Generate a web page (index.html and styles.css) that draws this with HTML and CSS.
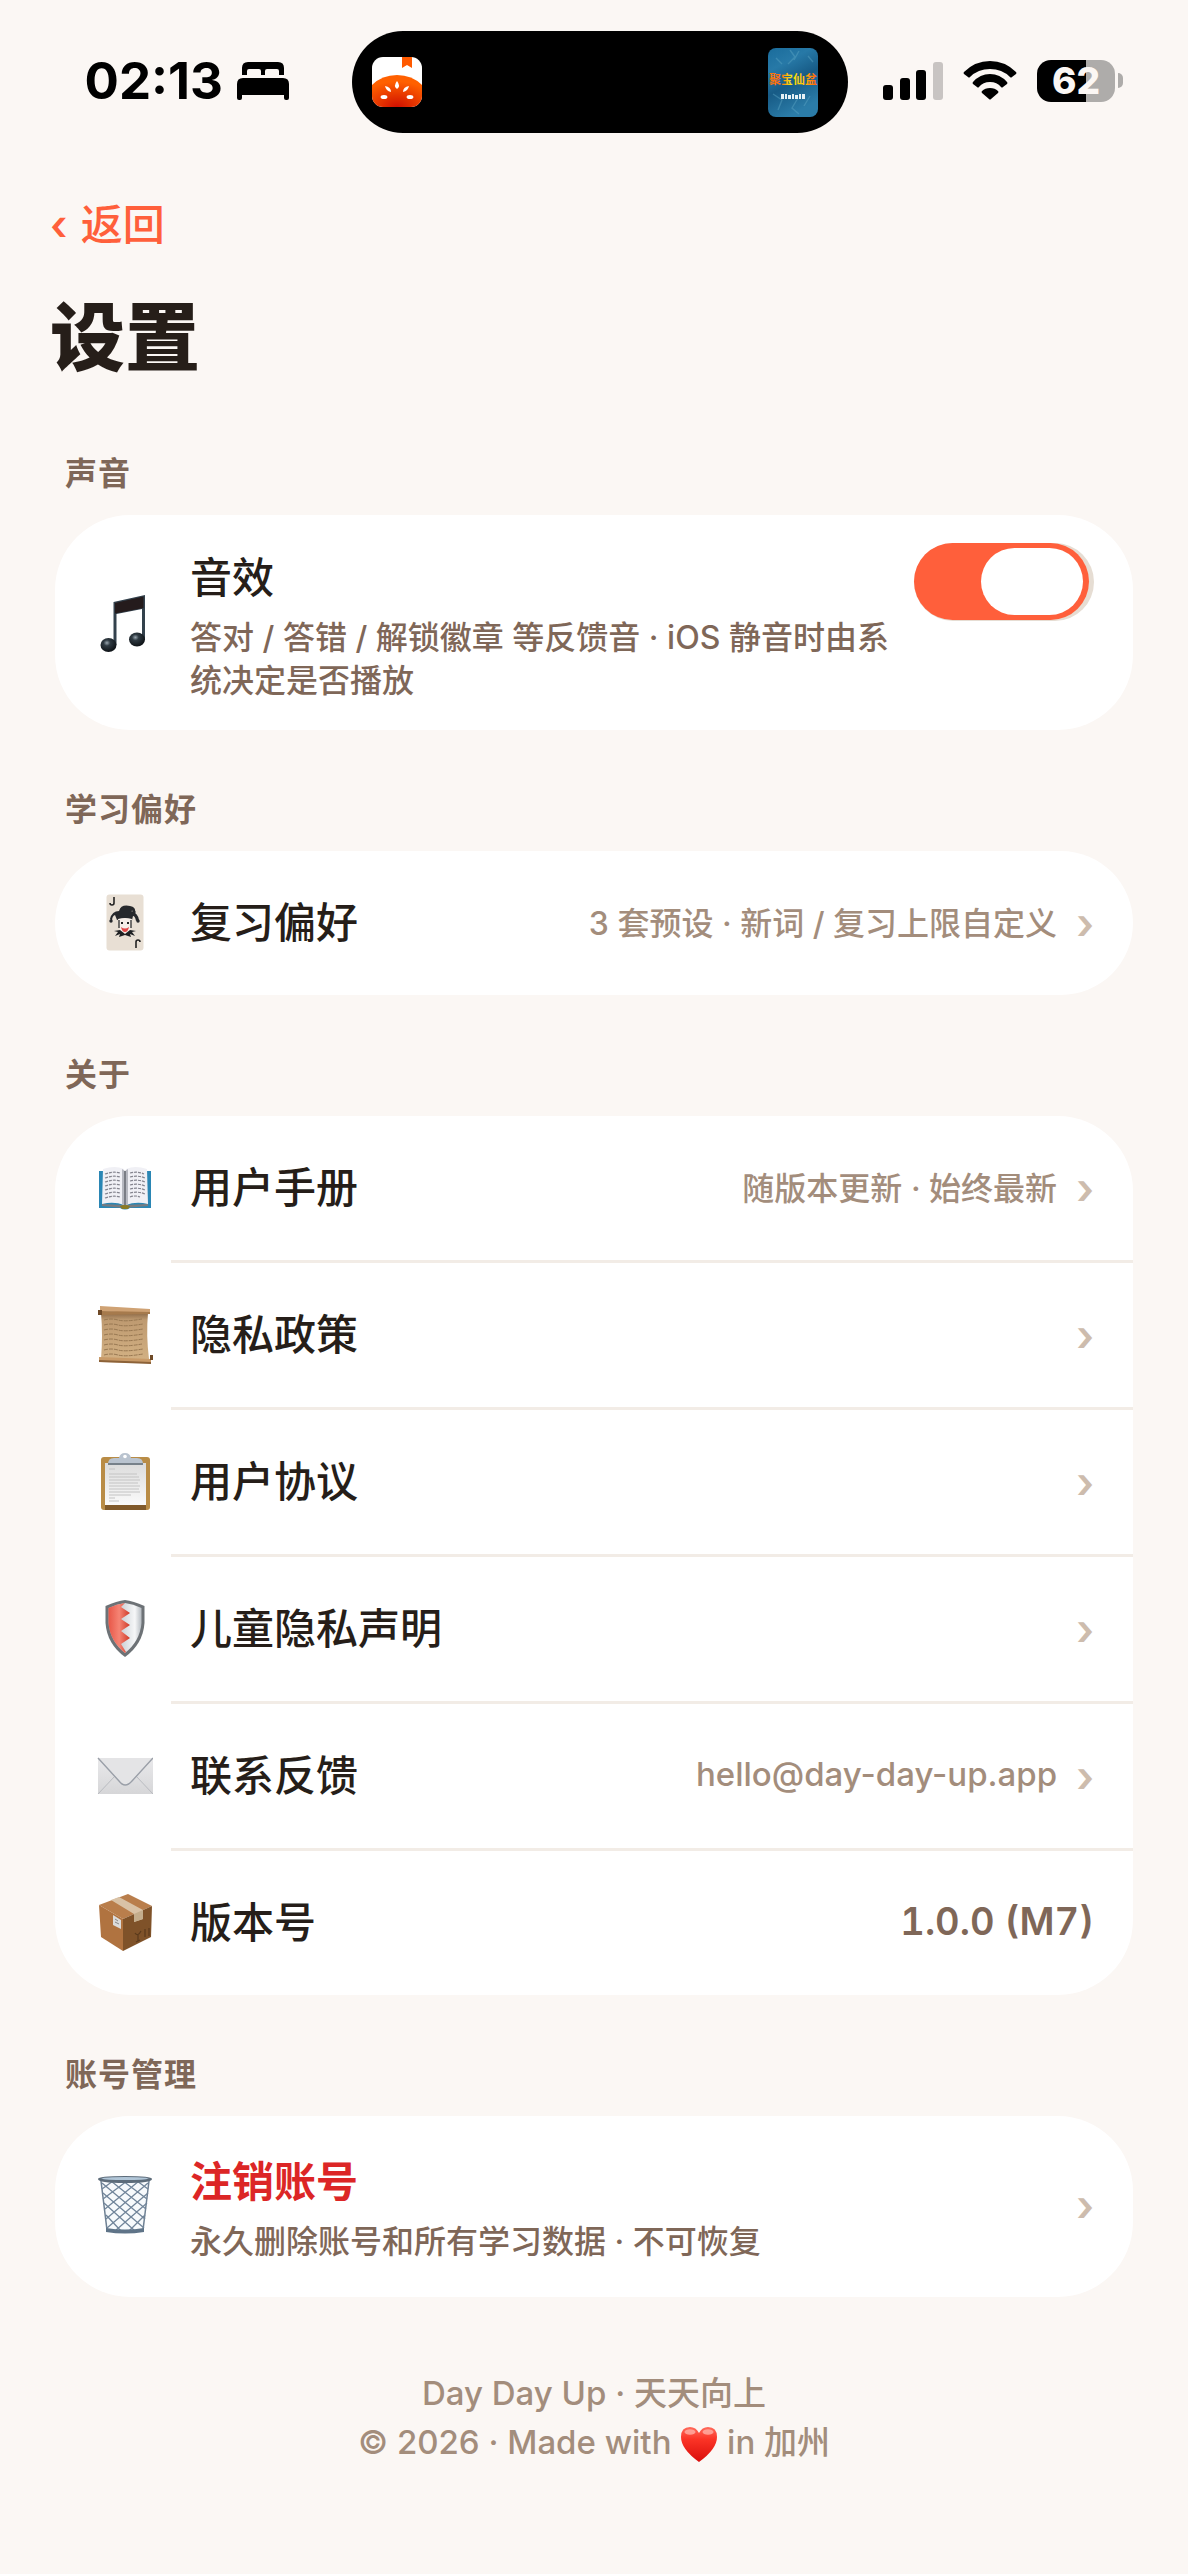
FILE: index.html
```html
<!DOCTYPE html>
<html lang="zh-CN">
<head>
<meta charset="utf-8">
<meta name="viewport" content="width=device-width, initial-scale=1">
<title>设置</title>
<link rel="stylesheet" href="styles.css">
</head>
<body>
<header class="status">
  <div class="status-left">
    <span class="time">02:13</span>
    <svg class="bed" viewBox="0 0 52 38" aria-hidden="true">
      <path d="M5 13V6Q5 0 11 0H41Q47 0 47 6V13H42V9Q42 7 40 7H30Q28 7 28 9V13H24V9Q24 7 22 7H12Q10 7 10 9V13Z"/>
      <path d="M6 16H46Q52 16 52 22V36Q52 38 50 38H49Q47 38 47 36V33H5V36Q5 38 3 38H2Q0 38 0 36V22Q0 16 6 16Z"/>
    </svg>
  </div>
  <div class="island">
    <svg class="island-app" viewBox="0 0 50 50" aria-hidden="true">
      <defs>
        <radialGradient id="tomato" cx=".5" cy="1" r=".8"><stop offset="0" stop-color="#d01000"/><stop offset="1" stop-color="#ff6000"/></radialGradient>
        <clipPath id="appClip"><rect width="50" height="50" rx="11"/></clipPath>
      </defs>
      <g clip-path="url(#appClip)">
        <rect width="50" height="50" fill="#fff"/>
        <path d="M30 0H40V11L35 8L30 11Z" fill="#ff5a00"/>
        <path d="M0 28Q10 18 25 18T50 28V50H0Z" fill="url(#tomato)"/>
        <g fill="#fff">
          <path d="M25 24Q29 29 25 32Q21 29 25 24Z"/>
          <path d="M13 29Q19 30 19 35Q14 34 13 29Z"/>
          <path d="M37 29Q31 30 31 35Q36 34 37 29Z"/>
          <ellipse cx="12" cy="40" rx="3.4" ry="2"/>
          <ellipse cx="38" cy="40" rx="3.4" ry="2"/>
        </g>
      </g>
    </svg>
    <svg class="island-poster" viewBox="0 0 50 69" aria-hidden="true">
      <defs>
        <linearGradient id="sea" x1="0" y1="0" x2=".4" y2="1"><stop offset="0" stop-color="#1a6c9c"/><stop offset=".3" stop-color="#2779a7"/><stop offset=".6" stop-color="#175b86"/><stop offset="1" stop-color="#2b7ca8"/></linearGradient>
        <linearGradient id="flame" x1="0" x2="1"><stop offset="0" stop-color="#f47a10"/><stop offset=".25" stop-color="#ff6a10"/><stop offset=".45" stop-color="#f4e80c"/><stop offset=".7" stop-color="#ffc60a"/><stop offset="1" stop-color="#ff5c0c"/></linearGradient>
      </defs>
      <rect width="50" height="69" rx="8" fill="url(#sea)"/>
      <path d="M22 2L27 9L20 16M31 3L26 12M8 10L14 16M40 8L45 14M5 46L14 52L10 62M30 50L24 60L31 66M42 48L36 58" fill="none" stroke="#5aa3c4" stroke-width="1.4" opacity=".45"/>
      <text class="poster-title" x="25" y="36" text-anchor="middle" fill="url(#flame)">聚宝仙盆</text>
      <path d="M13 46h3v5h-3zM17 46h2v5h-2zM20 47h3v4h-3zM24 46h2v5h-2zM27 47h3v4h-3zM31 46h2v5h-2zM34 46h3v5h-3z" fill="#e6f1f5"/>
    </svg>
  </div>
  <div class="status-right">
    <svg class="signal" viewBox="0 0 60 38" aria-hidden="true">
      <rect x="0" y="23" width="10" height="15" rx="3"/><rect x="17" y="16" width="10" height="22" rx="3"/><rect x="33" y="8" width="10" height="30" rx="3"/><rect x="50" y="0" width="10" height="38" rx="3" fill="#c8c4c2"/>
    </svg>
    <svg class="wifi" viewBox="0 0 54 39" aria-hidden="true">
      <path d="M1 11Q12 0 27 0T53 11Q54 12 53 13L49 16Q48 17 47 16Q39 8 27 8T7 16Q6 17 5 16L1 13Q0 12 1 11Z"/>
      <path d="M10 21Q17 13 27 13T44 21Q45 22 44 23L40 26Q39 27 38 26Q34 21 27 21T16 26Q15 27 14 26L10 23Q9 22 10 21Z"/>
      <path d="M19 30Q22 27 27 27T35 30Q36 31 35 32L28 38Q27 39 26 38L19 32Q18 31 19 30Z"/>
    </svg>
    <div class="battery"><span class="battery-level">62</span></div>
  </div>
</header>

<main class="page">
  <a class="back" href="#"><span class="back-mark">‹</span> 返回</a>
  <h1 class="title">设置</h1>

  <section>
    <h2 class="label">声音</h2>
    <div class="card">
      <div class="row row-tall">
        <svg class="icon" viewBox="0 0 56 60" aria-hidden="true">
          <defs><radialGradient id="note" cx=".4" cy=".35" r=".6"><stop offset="0" stop-color="#9aa7b0"/><stop offset=".35" stop-color="#2f3a42"/><stop offset="1" stop-color="#11161a"/></radialGradient></defs>
          <path d="M16.5 9L48 2V46H45V16L19.500 21V52H16.500Z" fill="#33414c"/>
          <path d="M18 10L46.500 3.500V15L18 20.500Z" fill="#241b1c"/>
          <ellipse cx="11.500" cy="52" rx="8" ry="7" fill="url(#note)"/>
          <ellipse cx="40" cy="46.500" rx="8" ry="7" fill="url(#note)"/>
        </svg>
        <label class="text" for="sfx">
          <span class="name">音效</span>
          <span class="desc">答对 / 答错 / 解锁徽章 等反馈音 · iOS 静音时由系统决定是否播放</span>
        </label>
        <input class="switch" id="sfx" type="checkbox" role="switch" checked>
      </div>
    </div>
  </section>

  <section>
    <h2 class="label">学习偏好</h2>
    <div class="card">
      <a class="row" href="#">
        <svg class="icon" viewBox="0 0 56 60" aria-hidden="true">
          <rect x="9.500" y="1.500" width="37" height="56" rx="3" fill="#e8dfd4"/>
          <path d="M17 4v6q0 2-2 2t-2-2M39 55v-6q0-2 2-2t2 2" fill="none" stroke="#222" stroke-width="1.600"/>
          <path d="M13 26Q15 18 22 18Q24 11 33 13Q39 14 38 19Q36 17 34 18Q41 20 42 27L39 28Q38 23 36 23L35 27Q28 24 20 27L18 22Q15 23 15 28Z" fill="#26282c"/>
          <circle cx="14" cy="28" r="1.700" fill="#26282c"/><circle cx="41" cy="28" r="1.700" fill="#26282c"/><circle cx="37" cy="19" r="1.700" fill="#26282c"/>
          <path d="M21 26Q28 24 35 26L33 37L28 40L23 37Z" fill="#f6eee8"/>
          <path d="M22 27v8M34 27v8" stroke="#444" stroke-width="1.500"/>
          <path d="M24 30h2M30 30h2" stroke="#222" stroke-width="2"/>
          <path d="M24 34Q28 37 32 34Q31 39 28 39T24 34Z" fill="#e24848"/>
          <path d="M17 38L23 37L28 41L33 37L39 38L35 39L38 43L33 41L34 44L28 42L22 44L23 41L18 43L21 39Z" fill="#1d1f22"/>
        </svg>
        <span class="text"><span class="name">复习偏好</span></span>
        <span class="value">3 套预设 · 新词 / 复习上限自定义</span>
        <span class="chevron">›</span>
      </a>
    </div>
  </section>

  <section>
    <h2 class="label">关于</h2>
    <div class="card">
      <a class="row" href="#">
        <svg class="icon" viewBox="0 0 56 60" aria-hidden="true">
          <path d="M2 13H54V50H33Q28 53 23 50H2Z" fill="#2a86b4"/>
          <path d="M5 46L27 47L51 46V48L28 50L5 48Z" fill="#777b80"/>
          <path d="M6 11Q18 7 27 11V47Q17 43 5 46Z" fill="#f0f0f5"/>
          <path d="M50 11Q38 7 29 11V47Q39 43 51 46Z" fill="#f0f0f5"/>
          <path d="M25 11L28 13L31 11V46L28 48L25 46Z" fill="#b6b8c0"/>
          <path d="M28 13V47" stroke="#666a72" stroke-width="1.500"/>
          <path d="M8 16Q16 13 23 15M8 20Q16 17 23 19M8 24Q16 21 23 23M8 28Q16 25 23 27M8 32Q16 29 23 31M8 36Q16 33 23 35M8 40Q16 37 23 39M33 15Q41 13 47 16M33 19Q41 17 48 20M33 23Q41 21 48 24M33 27Q41 25 48 28M33 31Q41 29 48 32M33 35Q41 33 48 36M33 39Q38 37 43 39" fill="none" stroke="#85858f" stroke-width="1.200" stroke-dasharray="3 1"/>
          <path d="M23 48Q28 46 33 48L31 51H25Z" fill="#8a7a24"/>
        </svg>
        <span class="text"><span class="name">用户手册</span></span>
        <span class="value">随版本更新 · 始终最新</span>
        <span class="chevron">›</span>
      </a>
      <a class="row" href="#">
        <svg class="icon" viewBox="0 0 56 60" aria-hidden="true">
          <defs><linearGradient id="paper" x1="0" y1="0" x2="0" y2="1"><stop offset="0" stop-color="#8c6a48"/><stop offset=".15" stop-color="#be9a70"/><stop offset="1" stop-color="#d2b083"/></linearGradient></defs>
          <path d="M4 8H51Q49 30 52 54H4Q6 30 4 8Z" fill="url(#paper)"/>
          <path d="M7 15q7-2 14 0t24-1M7 20q7-2 14 0t25-1M7 25q7-2 14 0t25-1M7 30q7-2 14 0t25-1M7 35q7-2 14 0t25-1M7 40q7-2 14 0t24-1M7 45q7-2 14 0t25-1M7 50q7-2 14 0t25-1" fill="none" stroke="#987852" stroke-width="1" stroke-dasharray="4 1"/>
          <path d="M3 1L53 4V9L3 6Z" fill="#cfa274"/>
          <path d="M1 5H5V10H1Z" fill="#6f4a28"/>
          <path d="M5 6L53 7V9L5 10Z" fill="#a67a4c"/>
          <path d="M2 52L54 54V58L2 57Z" fill="#c89a68"/>
          <path d="M2 55L54 57V59L2 57Z" fill="#8c6238"/>
          <path d="M53 50H56V55H53Z" fill="#6f4a28"/>
        </svg>
        <span class="text"><span class="name">隐私政策</span></span>
        <span class="chevron">›</span>
      </a>
      <a class="row" href="#">
        <svg class="icon" viewBox="0 0 56 60" aria-hidden="true">
          <defs><linearGradient id="sheet" x1="0" y1="0" x2="0" y2="1"><stop offset="0" stop-color="#dcdcdc"/><stop offset="1" stop-color="#fafafa"/></linearGradient></defs>
          <rect x="4" y="5" width="49" height="53" rx="3" fill="#b98c46"/>
          <rect x="8" y="53" width="41" height="5" fill="#80592a"/>
          <rect x="8" y="11" width="41" height="42" fill="url(#sheet)"/>
          <path d="M12 17h6M12 22h28M12 25h30M12 28h31M12 31h29M12 34h31M12 37h30M12 40h31M12 43h22M12 46h6M12 49h10" stroke="#c4c4c4" stroke-width="1.200"/>
          <path d="M11 12Q11 6 17 6H22Q23 1 28 1T34 6H40Q46 6 46 12Z" fill="#b9c3cf"/>
          <circle cx="28" cy="4.500" r="1.800" fill="#fff"/>
          <path d="M11 11H46V13H11Z" fill="#77818a"/>
        </svg>
        <span class="text"><span class="name">用户协议</span></span>
        <span class="chevron">›</span>
      </a>
      <a class="row" href="#">
        <svg class="icon" viewBox="0 0 56 60" aria-hidden="true">
          <defs>
            <linearGradient id="steel" x1="0" x2="1"><stop offset="0" stop-color="#a6adb4"/><stop offset=".6" stop-color="#e2e5e8"/><stop offset=".8" stop-color="#f6f7f8"/><stop offset="1" stop-color="#b6bcc2"/></linearGradient>
            <linearGradient id="red" x1="0" x2="1"><stop offset="0" stop-color="#e85748"/><stop offset=".5" stop-color="#f58474"/><stop offset="1" stop-color="#cf3a28"/></linearGradient>
          </defs>
          <path d="M28 1Q36 2 47.500 7V24Q46 45 28 58Q10 45 8.500 24V7Q20 2 28 1Z" fill="#6d7276"/>
          <path d="M28 4Q36 5 44.500 9V24Q43 42 28 54Q13 42 11.500 24V9Q20 5 28 4Z" fill="url(#steel)"/>
          <path d="M28 4L24 8L33 14L24 20L33 26L24 32L33 39L24 45L29 53L28 54Q13 42 11.500 24V9Q20 5 28 4Z" fill="url(#red)"/>
        </svg>
        <span class="text"><span class="name">儿童隐私声明</span></span>
        <span class="chevron">›</span>
      </a>
      <a class="row" href="mailto:hello@day-day-up.app">
        <svg class="icon" viewBox="0 0 56 60" aria-hidden="true">
          <defs><linearGradient id="mail" x1="0" y1="0" x2="0" y2="1"><stop offset="0" stop-color="#e9e9eb"/><stop offset="1" stop-color="#d6d6d8"/></linearGradient></defs>
          <rect x="1" y="12" width="55" height="36" rx="1" fill="url(#mail)"/>
          <path d="M1 48L18 30M56 48L39 30" stroke="#b9bbc0" stroke-width="1"/>
          <path d="M1 12L22 35Q28 43 35 35L56 12" fill="#e4e4e6" stroke="#9a9fa8" stroke-width="1.400"/>
        </svg>
        <span class="text"><span class="name">联系反馈</span></span>
        <span class="value value-latin">hello@day-day-up.app</span>
        <span class="chevron">›</span>
      </a>
      <div class="row">
        <svg class="icon" viewBox="0 0 56 60" aria-hidden="true">
          <path d="M2 12L31 1L55 13L26 26Z" fill="#b97e4c"/>
          <path d="M2 12L26 26V58L4 44Z" fill="#b07340"/>
          <path d="M55 13L26 26V58L54 44Z" fill="#7f5229"/>
          <path d="M14 7L22 4L46 17V26L37 29V21Z" fill="#d9c2a6"/>
          <path d="M37 21L46 17V26L37 29Z" fill="#c4ad8c"/>
          <path d="M16 22L24 27V36L16 32Z" fill="#dcdcdc"/>
          <path d="M18 26l3 2M18 29l4 2" stroke="#888" stroke-width="1"/>
          <path d="M38 40q3 4 6-2M41 42v6M39 49l4-2M48 36v8M52 35v8" stroke="#5a3a1c" stroke-width="1.200" fill="none"/>
        </svg>
        <span class="text"><span class="name">版本号</span></span>
        <span class="version">1.0.0 (M7)</span>
      </div>
    </div>
  </section>

  <section>
    <h2 class="label">账号管理</h2>
    <div class="card">
      <a class="row row-danger" href="#">
        <svg class="icon" viewBox="0 0 56 60" aria-hidden="true">
          <path d="M4 6L10 55Q28 58 46 55L52 6" fill="#f7fafc" stroke="#6e8093" stroke-width="1.500"/>
          <path d="M5 14L16 6M6 24L30 6M8 34L42 6M9 44L51 8M10 53L51 18M18 56L50 28M32 56L48 40M51 14L40 6M50 24L26 6M49 34L14 6M48 44L5 8M47 53L6 18M38 56L7 28M24 56L9 40" stroke="#71859a" stroke-width="1.300"/>
          <path d="M9 53Q28 56 47 53V57Q28 60 9 57Z" fill="#5f7488"/>
          <path d="M1 4Q1 1 28 1T55 4Q55 8 28 8T1 4Z" fill="#5d6c7a"/>
          <path d="M4 3.500Q8 2 28 2T52 3.500Q48 5 28 5T4 3.500Z" fill="#b1c6d8"/>
        </svg>
        <span class="text">
          <span class="name danger">注销账号</span>
          <span class="desc">永久删除账号和所有学习数据 · 不可恢复</span>
        </span>
        <span class="chevron">›</span>
      </a>
    </div>
  </section>

  <footer class="footer">
    <p>Day Day Up · 天天向上</p>
    <p>© 2026 · Made with
      <svg class="heart" viewBox="0 0 38 36" role="img" aria-label="爱心">
        <defs><linearGradient id="love" x1="0" y1="0" x2="0" y2="1"><stop offset="0" stop-color="#ff6b5c"/><stop offset=".35" stop-color="#fb3426"/><stop offset="1" stop-color="#d90d0b"/></linearGradient></defs>
        <path d="M19 36Q1 23 1 11Q1 1 10 1Q16 1 19 7Q22 1 28 1Q37 1 37 11Q37 23 19 36Z" fill="url(#love)"/>
        <ellipse cx="10" cy="6" rx="5.500" ry="2.800" fill="#ffb0a6" opacity=".8"/><ellipse cx="28" cy="6" rx="5.500" ry="2.800" fill="#ffb0a6" opacity=".8"/>
      </svg>
      in 加州</p>
  </footer>
</main>
</body>
</html>
```
FILE: styles.css
```css
* {
  box-sizing: border-box;
}

body {
  margin: 0;
  background: #fbf7f4;
  color: #261e19;
  font-family: Inter, "Noto Sans CJK SC", sans-serif;
  font-size: 32px;
  font-weight: 500;
}

a {
  color: inherit;
  text-decoration: none;
}

/* Status bar */
.status {
  display: grid;
  grid-template-columns: 1fr 496px 1fr;
  align-items: center;
  padding: 31px 0 0 12px;
  color: #000;
}

.status-left {
  display: flex;
  align-items: center;
  justify-content: flex-end;
  gap: 14px;
  padding: 0 63px 3px 0;
}

.time {
  font-size: 51px;
  font-weight: 700;
  line-height: 60px;
}

.bed {
  width: 52px;
  height: 38px;
}

.island {
  display: flex;
  align-items: center;
  justify-content: space-between;
  height: 102px;
  padding: 0 30px 0 20px;
  border-radius: 51px;
  background: #000;
}

.island-app {
  width: 50px;
  height: 50px;
}

.island-poster {
  width: 50px;
  height: 69px;
}

.poster-title {
  font-size: 12px;
  font-weight: 700;
}

.status-right {
  display: flex;
  align-items: center;
  gap: 20px;
  padding: 0 0 3px 35px;
}

.signal {
  width: 60px;
  height: 38px;
}

.wifi {
  width: 54px;
  height: 39px;
}

.battery {
  display: flex;
  align-items: center;
}

.battery-level {
  width: 78px;
  border-radius: 14px;
  background: linear-gradient(to right, #000 49px, #aeacaa 49px);
  color: #fbf7f4;
  font-size: 37px;
  font-weight: 800;
  line-height: 42px;
  text-align: center;
}

.battery::after {
  content: "";
  width: 5px;
  height: 15px;
  margin-left: 3px;
  border-radius: 0 5px 5px 0;
  background: #aeacaa;
}

/* Page */
.page {
  padding: 61px 55px 0;
}

.back {
  display: block;
  margin-left: -5px;
  color: #ff5f3b;
  font-size: 42px;
  line-height: 62px;
}

.back-mark {
  margin-right: 2px;
  font-weight: 600;
}

.title {
  margin: 32px 0 0 -5px;
  font-size: 75px;
  font-weight: 800;
  line-height: 100px;
}

.label {
  margin: 59px 10px 20px;
  color: #7f6758;
  font-size: 32px;
  font-weight: 700;
  line-height: 42px;
  letter-spacing: 1px;
}

.title + section .label {
  margin-top: 65px;
}

.card {
  overflow: hidden;
  border-radius: 75px;
  background: #fff;
}

.row {
  position: relative;
  display: flex;
  align-items: center;
  min-height: 144px;
  padding: 28px 39px 28px 42px;
}

.row + .row {
  min-height: 147px;
  padding-top: 31px;
}

.row + .row::before {
  content: "";
  position: absolute;
  top: 0;
  right: 0;
  left: 116px;
  height: 3px;
  background: #f2ece6;
}

.row-danger {
  min-height: 181px;
  padding-bottom: 32px;
}

.icon {
  flex: none;
  width: 56px;
  height: 60px;
  margin-right: 37px;
}

.text {
  flex: 1;
  display: flex;
  flex-direction: column;
  gap: 3px;
}

.name {
  font-size: 42px;
  line-height: 70px;
}

.danger {
  color: #dc2626;
  font-weight: 700;
}

.desc {
  color: #7f6758;
  line-height: 43px;
}

.value {
  padding-bottom: 5px;
  color: #a38d7c;
}

.value-latin {
  font-size: 33px;
}

.chevron {
  margin-left: 19px;
  color: #cdbcad;
  font-size: 43px;
  font-weight: 600;
  line-height: 60px;
}

.version {
  padding-bottom: 5px;
  color: #7f6758;
  font-size: 38px;
  font-weight: 600;
  font-variant-numeric: tabular-nums;
}

.switch {
  position: relative;
  flex: none;
  align-self: flex-start;
  width: 180px;
  height: 78px;
  margin: 0 0 0 12px;
  border-radius: 39px;
  background: #e6ddd3;
  appearance: none;
}

.switch::before {
  content: "";
  display: block;
  width: 175px;
  height: 77px;
  border-radius: 39px;
  background: #ff5f3b;
}

.switch::after {
  content: "";
  position: absolute;
  top: 5px;
  right: 11px;
  width: 102px;
  height: 67px;
  border-radius: 34px;
  background: #fff;
}

.footer {
  padding: 72px 0 50px;
  color: #a38d7c;
  font-size: 33px;
  line-height: 49px;
  text-align: center;
}

.footer p {
  margin: 0;
}

.heart {
  width: 38px;
  height: 36px;
  vertical-align: -8px;
}
```
